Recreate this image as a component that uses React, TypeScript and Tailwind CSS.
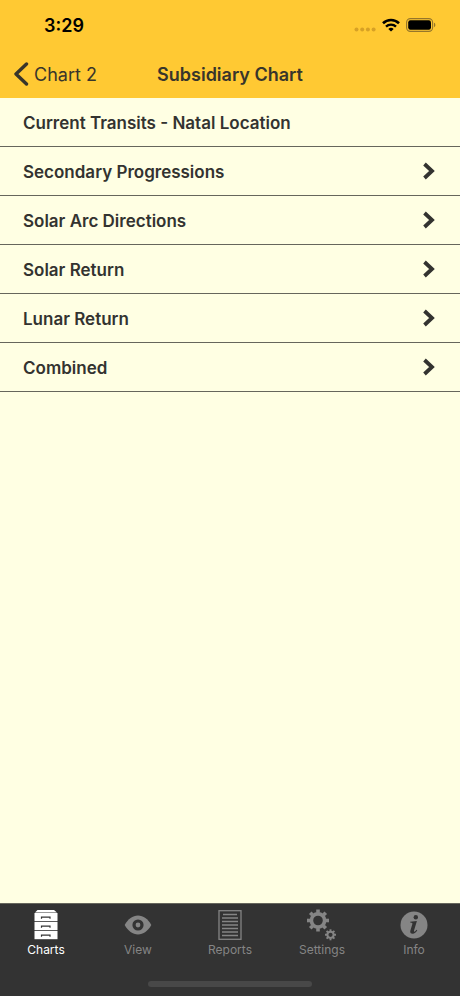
import type { ReactNode } from "react";
import clsx from "clsx";

interface ChartOption {
  label: string;
  hasDetail: boolean;
}

interface Tab {
  label: string;
  icon: ReactNode;
}

const chartOptions: ChartOption[] = [
  { label: "Current Transits - Natal Location", hasDetail: false },
  { label: "Secondary Progressions", hasDetail: true },
  { label: "Solar Arc Directions", hasDetail: true },
  { label: "Solar Return", hasDetail: true },
  { label: "Lunar Return", hasDetail: true },
  { label: "Combined", hasDetail: true },
];

const toothAngles = [0, 45, 90, 135, 180, 225, 270, 315];

function CabinetIcon() {
  return (
    <svg width="24" height="30" viewBox="0 0 24 30" aria-hidden="true">
      <path d="M3.5 0h16.500L23 2.500H1z" fill="currentColor" />
      {[3, 12, 21].map((y) => (
        <g key={y}>
          <rect x="0.500" y={y} width="23" height="8.200" fill="currentColor" />
          <path
            d={`M7.500 ${y + 5.8}v-1.700h8.500v1.700`}
            fill="none"
            stroke="#333333"
            strokeWidth="1.200"
          />
        </g>
      ))}
    </svg>
  );
}

function EyeIcon() {
  return (
    <svg width="28" height="30" viewBox="0 0 28 30" aria-hidden="true">
      <path
        d="M0.700 15C4 9 8.700 5.600 14 5.600s10 3.400 13.300 9.400c-3.300 6-8 9.400-13.300 9.400S4 21 0.700 15z"
        fill="currentColor"
      />
      <circle cx="14" cy="15" r="4" fill="none" stroke="#333333" strokeWidth="3.200" />
    </svg>
  );
}

function ReportIcon() {
  return (
    <svg
      width="24"
      height="30"
      viewBox="0 0 24 30"
      fill="none"
      stroke="currentColor"
      aria-hidden="true"
    >
      <rect x="1" y="0.700" width="22" height="28.600" strokeWidth="1.300" />
      <path
        d="M5 4.500h14M4 8h16M4 11.500h16M4 15h16M4 18.500h16M4 22h16M4 25.500h16"
        strokeWidth="1.400"
      />
    </svg>
  );
}

function GearsIcon() {
  return (
    <svg
      width="30"
      height="32"
      viewBox="0 0 30 32"
      fill="none"
      stroke="currentColor"
      aria-hidden="true"
    >
      <circle cx="11" cy="11.500" r="6.600" strokeWidth="3.600" />
      {toothAngles.map((angle) => (
        <path
          key={angle}
          d="M11 3.800V0.500"
          strokeWidth="3.600"
          transform={`rotate(${angle} 11 11.5)`}
        />
      ))}
      <circle cx="23.500" cy="25.800" r="3.100" strokeWidth="2" />
      {toothAngles.map((angle) => (
        <path
          key={angle}
          d="M23.500 22.300v-2"
          strokeWidth="1.900"
          transform={`rotate(${angle} 23.5 25.8)`}
        />
      ))}
    </svg>
  );
}

function InfoIcon() {
  return (
    <svg width="28" height="30" viewBox="0 0 28 30" aria-hidden="true">
      <circle cx="14" cy="15" r="13.500" fill="currentColor" />
      <circle cx="15.800" cy="7.200" r="2.200" fill="#333333" />
      <path
        d="M10.200 11.800l6.700-.9-2.800 9.400c-.3 1-.1 1.400.3 1.400.6 0 1.400-.8 2.100-1.900l.8.500c-1.300 2.300-2.800 3.500-4.600 3.500-2 0-2.900-1.300-2.300-3.300l1.900-6.300c.3-1 .1-1.400-.8-1.500l-1.300-.1z"
        fill="#333333"
      />
    </svg>
  );
}

const tabs: Tab[] = [
  { label: "Charts", icon: <CabinetIcon /> },
  { label: "View", icon: <EyeIcon /> },
  { label: "Reports", icon: <ReportIcon /> },
  { label: "Settings", icon: <GearsIcon /> },
  { label: "Info", icon: <InfoIcon /> },
];

function StatusBar() {
  return (
    <div className="flex h-[50px] items-center justify-between pr-6 pl-11 text-black">
      <span className="text-[18px] font-semibold">3:29</span>
      <div className="flex items-center gap-[6px]">
        <svg width="22" height="14" viewBox="0 0 22 14" fill="#d7a125" aria-hidden="true">
          <circle cx="2.500" cy="11.500" r="2" />
          <circle cx="8.200" cy="11.500" r="2" />
          <circle cx="13.900" cy="11.500" r="2" />
          <circle cx="19.600" cy="11.500" r="2" />
        </svg>
        <svg width="18" height="14" viewBox="0 0 18 14" fill="none" stroke="black" aria-hidden="true">
          <path d="M1 5.200a11.600 11.600 0 0 1 16 0" strokeWidth="2.600" />
          <path d="M4 8.600a7.200 7.200 0 0 1 10 0" strokeWidth="2.400" />
          <path d="M9 13.600L6.300 11a3.900 3.900 0 0 1 5.400 0z" fill="black" stroke="none" />
        </svg>
        <svg width="30" height="14" viewBox="0 0 30 14" aria-hidden="true">
          <rect x="0.600" y="0.600" width="26" height="12.800" rx="3.800" fill="none" stroke="#96762a" strokeWidth="1.100" />
          <rect x="2.200" y="2.200" width="22.800" height="9.600" rx="2.200" fill="black" />
          <path d="M28 4.800c1.800.6 1.800 3.800 0 4.400z" fill="#96762a" />
        </svg>
      </div>
    </div>
  );
}

function NavigationBar() {
  return (
    <div className="grid h-12 grid-cols-[1fr_auto_1fr] items-center px-3 text-[18px] text-[#38352b]">
      <button type="button" className="flex items-center gap-1">
        <svg width="18" height="24" viewBox="0 0 18 24" fill="none" aria-hidden="true">
          <path
            d="M14.500 2L4 12l10.500 10"
            stroke="currentColor"
            strokeWidth="3.400"
            strokeLinecap="round"
            strokeLinejoin="round"
          />
        </svg>
        Chart 2
      </button>
      <h1 className="font-semibold">Subsidiary Chart</h1>
    </div>
  );
}

function ChartOptionRow({ label, hasDetail }: ChartOption) {
  return (
    <li className="border-b border-[#66665c]">
      <button
        type="button"
        className="flex h-12 w-full items-center justify-between pr-6 pl-[23px] text-left"
      >
        <span className="pt-0.5 text-[17px] leading-6 font-semibold">{label}</span>
        {hasDetail && (
          <svg width="14" height="18" viewBox="0 0 14 18" fill="none" aria-hidden="true">
            <path d="M2.500 2L10 9l-7.500 7" stroke="currentColor" strokeWidth="3.800" />
          </svg>
        )}
      </button>
    </li>
  );
}

function TabBar() {
  return (
    <nav className="bg-[#333333] pb-[9px]">
      <ul className="grid h-[78px] grid-cols-5 border-t border-[#66665c]">
        {tabs.map(({ label, icon }, index) => (
          <li key={label}>
            <button
              type="button"
              className={clsx(
                "flex w-full flex-col items-center pt-[5px] text-[12px] leading-[18px]",
                index === 0 ? "text-white" : "text-[#858585]"
              )}
            >
              <span className="flex h-8 items-center">{icon}</span>
              {label}
            </button>
          </li>
        ))}
      </ul>
      {/* Home indicator */}
      <div className="mx-auto h-[6px] w-[164px] rounded-full bg-[#484848]" />
    </nav>
  );
}

export default function App() {
  return (
    <div className="flex min-h-screen flex-col bg-[#ffffe3] font-['Inter','Liberation_Sans',sans-serif] text-[#333330]">
      <header className="bg-[#ffc933]">
        <StatusBar />
        <NavigationBar />
      </header>
      <main className="flex-1">
        <ul>
          {chartOptions.map((option) => (
            <ChartOptionRow key={option.label} {...option} />
          ))}
        </ul>
      </main>
      <TabBar />
    </div>
  );
}
